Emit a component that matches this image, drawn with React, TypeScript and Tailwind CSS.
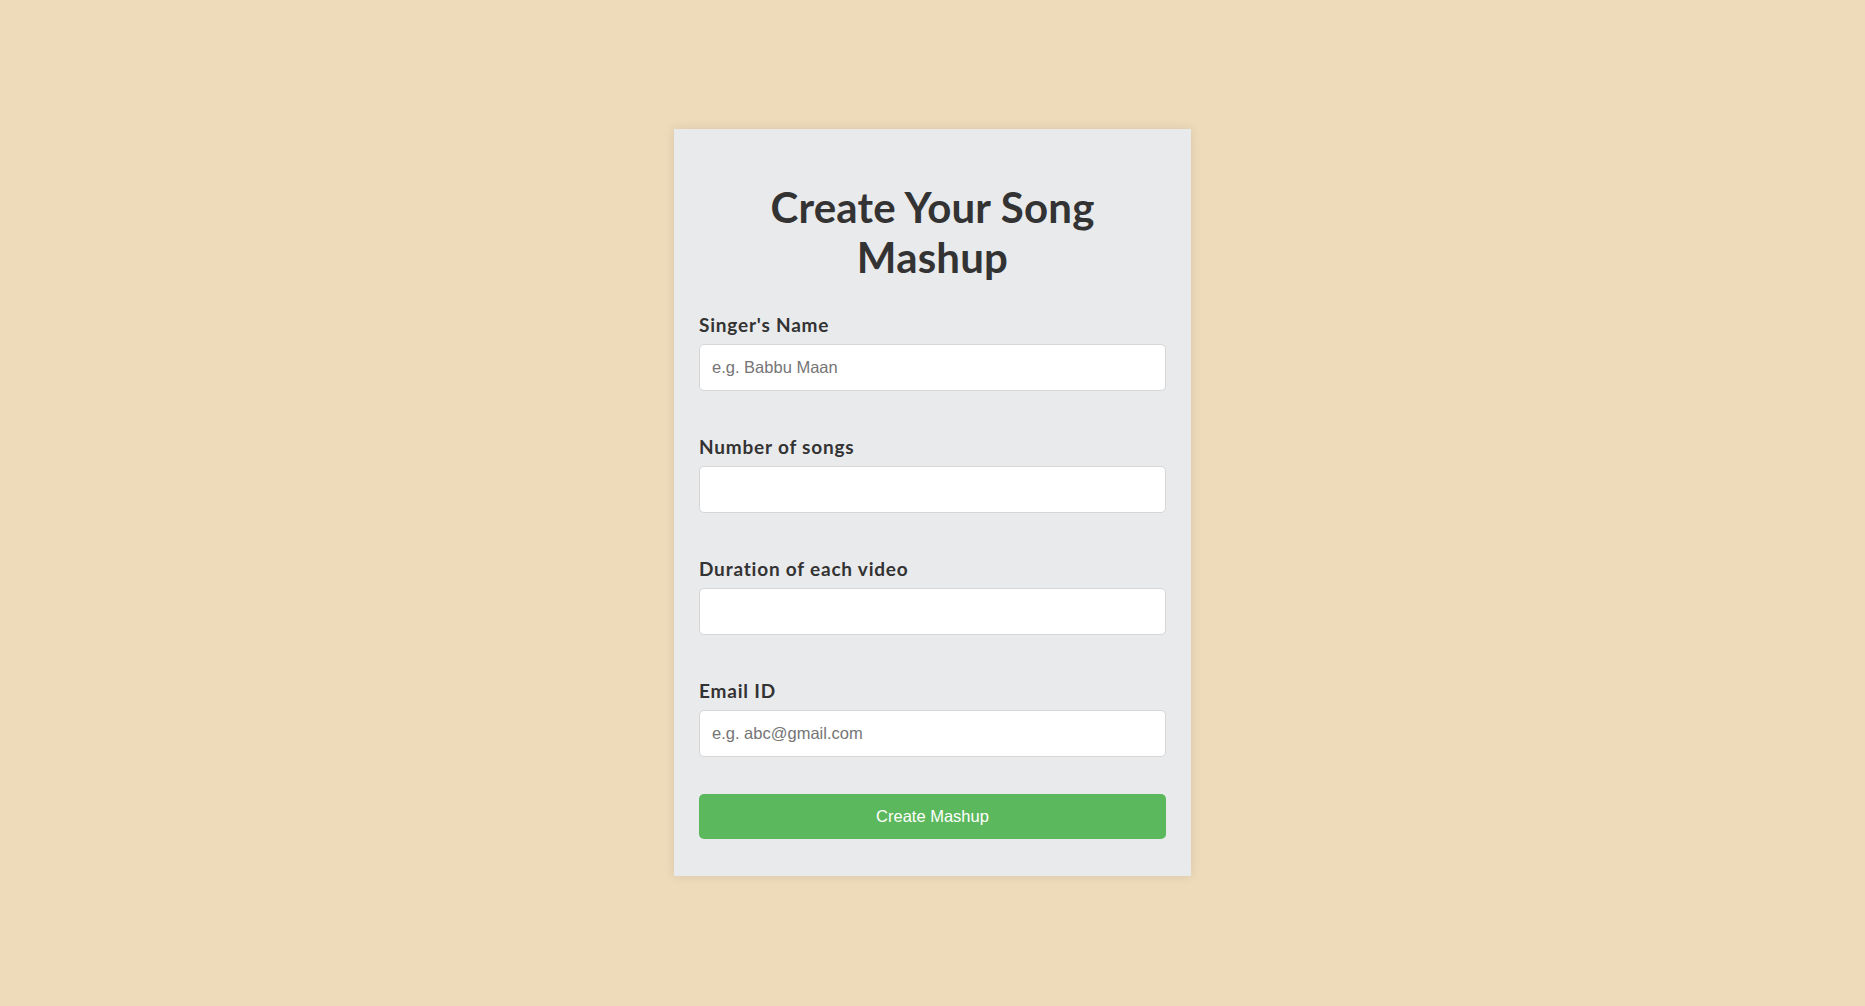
import React from "react";

function Field({ label, placeholder, type = "text" }: { label: string; placeholder?: string; type?: string }) {
  return (
    <div className="flex flex-col">
      <label className="text-[19px] leading-[22px] tracking-[0.8px] font-bold text-[#333333] font-['Lato','Noto_Sans',sans-serif] mb-[8px]">
        {label}
      </label>
      <input
        type={type}
        placeholder={placeholder}
        className="h-[47px] w-full rounded-[5px] border border-[#d6d6d6] bg-white px-[12px] text-[16.5px] text-[#333] font-['Liberation_Sans',Arial,sans-serif] placeholder:text-[#757575] outline-none"
      />
    </div>
  );
}

export default function App() {
  return (
    <div className="min-h-[1006px] w-full bg-[#eedbba] flex justify-center pt-[129px]">
      <div className="w-[517px] h-[747px] bg-[#e9eaec] shadow-[0_0_10px_rgba(0,0,0,0.1)] px-[25px] pt-[53px] flex flex-col">
        <h1 className="text-center text-[42px] leading-[50px] tracking-[0.2px] font-bold text-[#333333] font-['Lato','Noto_Sans',sans-serif] px-[40px] mb-[32px]">
          Create Your Song Mashup
        </h1>
        <div className="flex flex-col gap-[45px]">
          <Field label="Singer's Name" placeholder="e.g. Babbu Maan" />
          <Field label="Number of songs" type="number" />
          <Field label="Duration of each video" type="number" />
          <Field label="Email ID" placeholder="e.g. abc@gmail.com" type="email" />
        </div>
        <button className="mt-[37px] h-[45px] w-full rounded-[5px] bg-[#5cb85c] text-white text-[16.5px] font-['Liberation_Sans',Arial,sans-serif]">
          Create Mashup
        </button>
      </div>
    </div>
  );
}
